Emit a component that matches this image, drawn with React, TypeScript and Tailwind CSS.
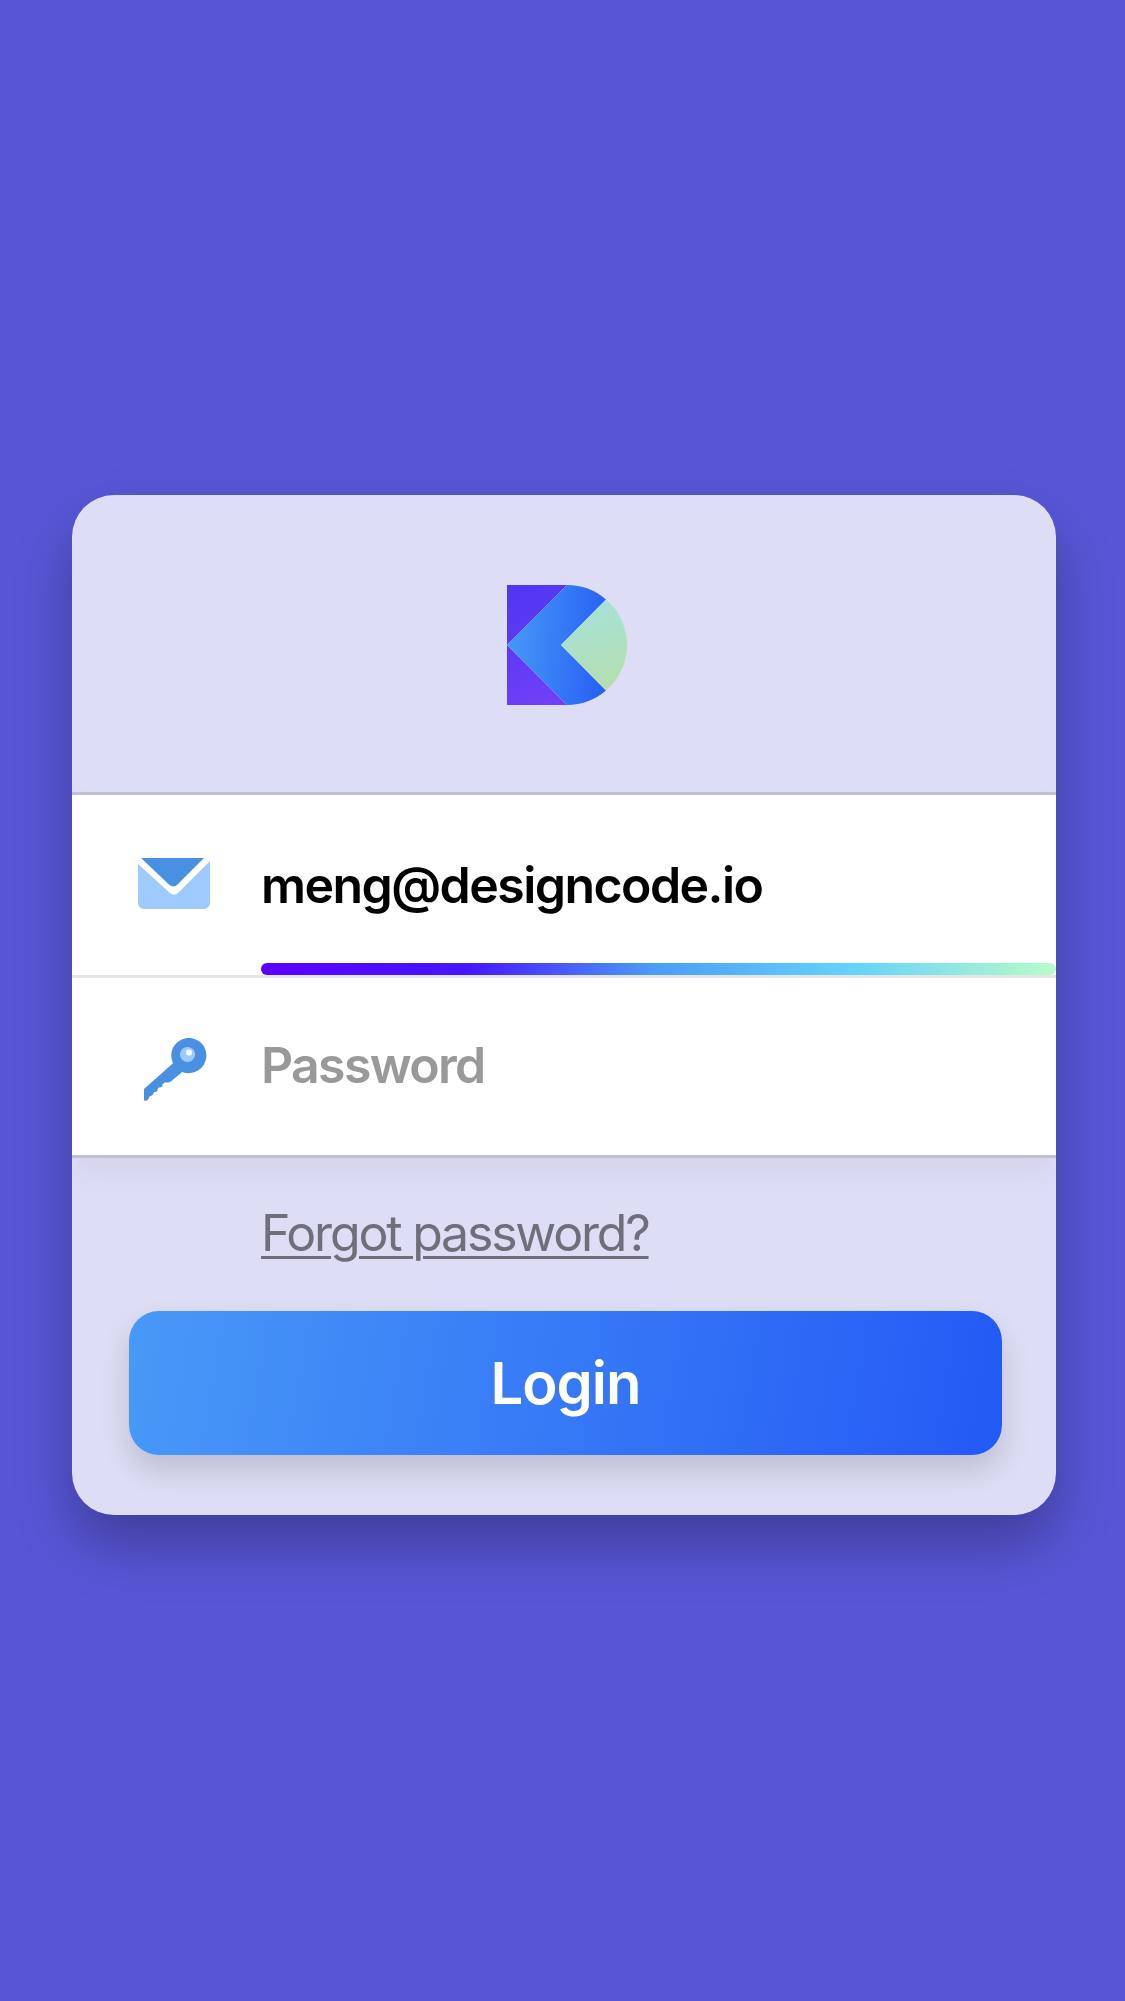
function Logo() {
  return (
    <svg width="120" height="120" viewBox="0 0 120 120" aria-label="Logo">
      <defs>
        <linearGradient id="purple" x1="0" y1="0" x2="60" y2="120" gradientUnits="userSpaceOnUse">
          <stop stopColor="#4f35f3" />
          <stop offset="1" stopColor="#7340f7" />
        </linearGradient>
        <linearGradient id="blue" x1="0" y1="56" x2="100" y2="64" gradientUnits="userSpaceOnUse">
          <stop stopColor="#4699f8" />
          <stop offset="1" stopColor="#295ff5" />
        </linearGradient>
        <linearGradient id="green" x1="80" y1="20" x2="110" y2="100" gradientUnits="userSpaceOnUse">
          <stop stopColor="#a6e1d9" />
          <stop offset="1" stopColor="#b6deae" />
        </linearGradient>
      </defs>
      <path d="M0 0H60L0 60Z" fill="url(#purple)" />
      <path d="M0 60L60 120H0Z" fill="url(#purple)" />
      <path d="M60 0A60 60 0 0 1 99 14.4L54 60L99 105.6A60 60 0 0 1 60 120L0 60Z" fill="url(#blue)" />
      <path d="M99 14.4A60 60 0 0 1 99 105.6L54 60Z" fill="url(#green)" />
    </svg>
  );
}

function MailIcon() {
  return (
    <svg width="72" height="51" viewBox="0 0 72 51">
      <path d="M0 6L32 35Q36 38.5 40 35L72 3V45A6 6 0 0 1 66 51H6A6 6 0 0 1 0 45Z" fill="#9fcaff" />
      <path d="M3 0H66L39.5 26.5Q35.5 30.5 31 26.5Z" fill="#4990e2" />
    </svg>
  );
}

function KeyIcon() {
  return (
    <svg width="63" height="63" viewBox="0 0 63 63">
      <path
        d="M29 25.3A17.6 17.6 0 1 1 38.3 33.9L26.8 43.6Q25.8 44.4 24.5 44.4L20.5 44.4L18.4 46.5V48.2Q17.5 49.5 14.8 49.5L13.6 51V52.4Q12.5 54.3 10 54L9.5 55.5Q9 57.5 5.5 58.4L4.2 61.6Q3.3 63 1.2 62.7L0 62.4V51Z"
        fill="#4990e2"
      />
      <circle cx="43.5" cy="16.5" r="7.6" fill="#9fcaff" />
      <circle cx="45" cy="14.6" r="3" fill="#fff" />
    </svg>
  );
}

export default function App() {
  return (
    <main className="flex h-[2001px] w-[1125px] items-start bg-[#5856d6] pt-[495px] pl-[72px] font-[Inter,sans-serif]">
      <section className="flex h-[1020px] w-[984px] flex-col overflow-hidden rounded-[42px] bg-[#dddef5] shadow-[0_30px_56px_rgba(0,0,0,0.27)]">
        <header className="flex h-[297px] w-full shrink-0 items-center justify-center pt-[3px] pl-[6px]">
          <Logo />
        </header>

        <div className="h-[366px] shrink-0 border-y-[3px] border-[#bfc0d5] bg-white shadow-[0_15px_30px_rgba(0,0,0,0.045)]">
          <label className="relative flex h-[180px] items-center">
            <span className="flex w-[189px] pb-[3px] pl-[66px]">
              <MailIcon />
            </span>
            <span className="text-[50px] leading-[60px] font-semibold tracking-[-1.56px] text-black">
              meng@designcode.io
            </span>
            <span className="absolute right-0 bottom-0 h-3 w-[795px] rounded-full bg-[linear-gradient(92deg,#5b00ff_0%,#4516ff_26%,#4b9ff8_50%,#66d4f9_75%,#b9fcc8_100%)]" />
          </label>
          <label className="flex h-[180px] items-center border-t-[3px] border-[#e6e6e6]">
            <span className="flex w-[189px] pt-[5px] pl-[72px]">
              <KeyIcon />
            </span>
            <span className="pb-[4px] text-[50px] leading-[60px] font-semibold tracking-[-1.7px] text-[#999]">
              Password
            </span>
          </label>
        </div>

        <a className="mt-[45px] ml-[189px] self-start text-[50px] leading-[60px] tracking-[-2.2px] text-[#6e6f7a] underline decoration-[3px] underline-offset-[5px]">
          Forgot password?
        </a>
        <button className="mt-[48px] ml-[57px] h-[144px] w-[873px] rounded-[30px] bg-[linear-gradient(100deg,#4899f7_0%,#2459f5_100%)] text-[58px] font-semibold tracking-[-1px] text-white shadow-[0_15px_30px_rgba(0,0,0,0.15)]">
          Login
        </button>
      </section>
    </main>
  );
}
